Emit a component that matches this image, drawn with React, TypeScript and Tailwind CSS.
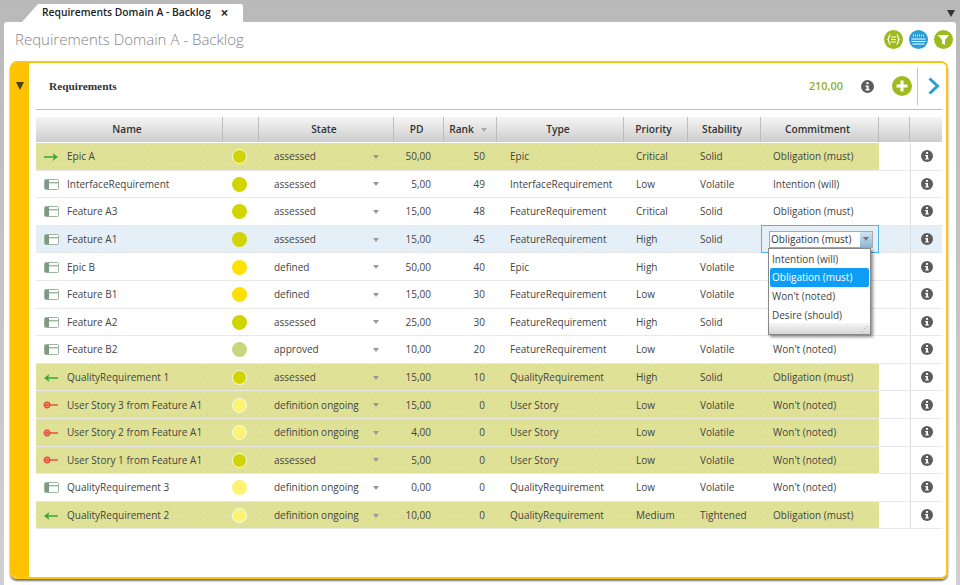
const cols = "grid grid-cols-[187px_36px_135px_50px_53px_127px_64px_73px_118px] items-center";

type RowData = {
  name: string;
  icon: "right" | "left" | "box" | "pin";
  state: string;
  pd: string;
  rank: string;
  type: string;
  priority: string;
  stability: string;
  commitment: string;
  hl?: boolean;
  selected?: boolean;
};

const rows: RowData[] = [
  { name: "Epic A", icon: "right", state: "assessed", pd: "50,00", rank: "50", type: "Epic", priority: "Critical", stability: "Solid", commitment: "Obligation (must)", hl: true },
  { name: "InterfaceRequirement", icon: "box", state: "assessed", pd: "5,00", rank: "49", type: "InterfaceRequirement", priority: "Low", stability: "Volatile", commitment: "Intention (will)" },
  { name: "Feature A3", icon: "box", state: "assessed", pd: "15,00", rank: "48", type: "FeatureRequirement", priority: "Critical", stability: "Solid", commitment: "Obligation (must)" },
  { name: "Feature A1", icon: "box", state: "assessed", pd: "15,00", rank: "45", type: "FeatureRequirement", priority: "High", stability: "Solid", commitment: "", selected: true },
  { name: "Epic B", icon: "box", state: "defined", pd: "50,00", rank: "40", type: "Epic", priority: "High", stability: "Volatile", commitment: "" },
  { name: "Feature B1", icon: "box", state: "defined", pd: "15,00", rank: "30", type: "FeatureRequirement", priority: "Low", stability: "Volatile", commitment: "" },
  { name: "Feature A2", icon: "box", state: "assessed", pd: "25,00", rank: "30", type: "FeatureRequirement", priority: "High", stability: "Solid", commitment: "" },
  { name: "Feature B2", icon: "box", state: "approved", pd: "10,00", rank: "20", type: "FeatureRequirement", priority: "Low", stability: "Volatile", commitment: "Won't (noted)" },
  { name: "QualityRequirement 1", icon: "left", state: "assessed", pd: "15,00", rank: "10", type: "QualityRequirement", priority: "High", stability: "Solid", commitment: "Obligation (must)", hl: true },
  { name: "User Story 3 from Feature A1", icon: "pin", state: "definition ongoing", pd: "15,00", rank: "0", type: "User Story", priority: "Low", stability: "Volatile", commitment: "Won't (noted)", hl: true },
  { name: "User Story 2 from Feature A1", icon: "pin", state: "definition ongoing", pd: "4,00", rank: "0", type: "User Story", priority: "Low", stability: "Volatile", commitment: "Won't (noted)", hl: true },
  { name: "User Story 1 from Feature A1", icon: "pin", state: "assessed", pd: "5,00", rank: "0", type: "User Story", priority: "Low", stability: "Volatile", commitment: "Won't (noted)", hl: true },
  { name: "QualityRequirement 3", icon: "box", state: "definition ongoing", pd: "0,00", rank: "0", type: "QualityRequirement", priority: "Low", stability: "Volatile", commitment: "Won't (noted)" },
  { name: "QualityRequirement 2", icon: "left", state: "definition ongoing", pd: "10,00", rank: "0", type: "QualityRequirement", priority: "Medium", stability: "Tightened", commitment: "Obligation (must)", hl: true },
];

function RowIcon({ icon }: { icon: RowData["icon"] }) {
  if (icon === "right")
    return (
      <svg width="16" height="10" viewBox="0 0 16 10">
        <path d="M1 5h10" stroke="#3aa535" strokeWidth="1.5" />
        <path d="M9.500 1 15 5l-5.500 4 1.500-4z" fill="#3aa535" />
      </svg>
    );
  if (icon === "left")
    return (
      <svg width="16" height="10" viewBox="0 0 16 10">
        <path d="M15 5H5" stroke="#3aa535" strokeWidth="1.5" />
        <path d="M6.500 1 1 5l5.500 4L5 5z" fill="#3aa535" />
      </svg>
    );
  if (icon === "pin")
    return (
      <svg width="16" height="10" viewBox="0 0 16 10" fill="none" stroke="#e8453c">
        <circle cx="4" cy="5" r="2.800" strokeWidth="1.300" />
        <path d="M1 5h14" strokeWidth="1.400" />
        <path d="M4 2v6" strokeWidth="1" />
      </svg>
    );
  return (
    <svg width="15" height="11" viewBox="0 0 15 11">
      <rect x="0.5" y="0.5" width="14" height="10" rx="1" fill="#fff" stroke="#9db5a0" />
      <rect x="1" y="1" width="4" height="9" fill="#7c9a7f" />
      <rect x="5" y="3" width="9" height="1.400" fill="#9db5a0" />
    </svg>
  );
}

function InfoIcon({ size = 12 }: { size?: number }) {
  return (
    <svg width={size} height={size} viewBox="0 0 12 12">
      <circle cx="6" cy="6" r="6" fill="#5c5c5c" />
      <rect x="5" y="2" width="2" height="1.800" fill="#fff" />
      <path d="M4.200 5h2.800v3.400h.9V9.600H4.200V8.400h1V6.200h-1z" fill="#fff" />
    </svg>
  );
}

function Dot({ state, hl }: { state: string; hl?: boolean }) {
  const color =
    state === "assessed"
      ? "bg-[#d2d400]"
      : state === "defined"
        ? "bg-[#ffe100]"
        : state === "approved"
          ? "bg-[#c6d77e]"
          : "bg-[#fbf373]";
  return (
    <div className={`${color} w-[13px] h-[13px] rounded-full box-content ${hl ? "border border-[#fafaec]" : "border border-transparent"}`} />
  );
}

function Row({ r }: { r: RowData }) {
  const bg = r.hl
    ? "bg-[#dfe296] bg-[radial-gradient(circle,#d5d888_0.5px,transparent_0.8px)] bg-size-[7px_7px]"
    : r.selected
      ? "bg-[#e4eff7]"
      : "bg-white";
  return (
    <div className={`flex h-[27.6px] text-[#444] border-b border-[#e8e8e8] ${r.selected ? "bg-[#e4eff7]" : ""}`}>
      <div className={`${cols} ${bg} w-[843px] relative pt-px`}>
        <div className="flex items-center pl-[7px] gap-[8px] whitespace-nowrap">
          <span className="w-[16px] flex justify-center shrink-0">
            <RowIcon icon={r.icon} />
          </span>
          {r.name}
        </div>
        <div className="flex justify-center pr-[4px]">
          <Dot state={r.state} hl={r.hl} />
        </div>
        <div className="flex items-center justify-between pl-[15px] pr-[15px]">
          <span className="whitespace-nowrap">{r.state}</span>
          <span className="w-0 h-0 border-x-[3.500px] border-x-transparent border-t-[4px] border-t-[#999]" />
        </div>
        <div className="text-right pr-[13px]">{r.pd}</div>
        <div className="text-right pr-[12px]">{r.rank}</div>
        <div className="pl-[13px] whitespace-nowrap">{r.type}</div>
        <div className="pl-[12px]">{r.priority}</div>
        <div className="pl-[12px]">{r.stability}</div>
        <div className="pl-[12px] whitespace-nowrap">{r.commitment}</div>
        {r.selected && <CommitEditor />}
      </div>
      <div className="w-[32px] border-r border-[#dcdcdc]" />
      <div className="flex-1 flex items-center justify-center pl-[1px]">
        <InfoIcon />
      </div>
    </div>
  );
}

function CommitEditor() {
  return (
    <div className="absolute left-[725px] top-[-1px] w-[118px] h-[28.600px] border border-[#4db4f0] pl-[7px] pr-[5px] pt-[5px] z-10">
      <div className="flex h-[17px] border border-[#a9a9a9] bg-white">
        <span className="flex-1 pl-[1px] leading-[15px] text-[#333] whitespace-nowrap">Obligation (must)</span>
        <span className="w-[12px] bg-gradient-to-b from-[#cfe3f2] to-[#8fb7d4] flex items-center justify-center">
          <span className="w-0 h-0 border-x-[3px] border-x-transparent border-t-[4px] border-t-[#777]" />
        </span>
      </div>
      <div className="absolute left-[6px] top-[22px] w-[103px] h-[87px] bg-white border border-[#888] shadow-[2px_2px_3px_rgba(0,0,0,0.45)] pt-[1px] text-[#444]">
        <div className="h-[18.600px] leading-[18.600px] pl-[3px]">Intention (will)</div>
        <div className="h-[18.600px] leading-[18.600px] pl-[3px] bg-[#0d9df5] text-white rounded-[2px] mx-[1px] -indent-[1px]">Obligation (must)</div>
        <div className="h-[18.600px] leading-[18.600px] pl-[3px]">Won't (noted)</div>
        <div className="h-[18.600px] leading-[18.600px] pl-[3px]">Desire (should)</div>
        <div className="absolute left-0 right-0 bottom-0 h-[11px] bg-gradient-to-b from-[#f6f6f6] to-[#d6d6d6] flex justify-end items-center pr-[2px] text-[7px] leading-none text-[#999]">
          ⋰
        </div>
      </div>
    </div>
  );
}

function HeaderCell({ children, line = true }: { children?: React.ReactNode; line?: boolean }) {
  return (
    <div className={`h-full flex items-center justify-center pr-[4px] ${line ? "border-r border-[#bdbdbd]" : ""}`}>{children}</div>
  );
}

export default function App() {
  return (
    <div
      className="w-[960px] h-[585px] overflow-hidden bg-gradient-to-b from-[#b9b9b9] to-[#d0d0d0] text-[10px]"
      style={{ fontFamily: '"Open Sans", "Noto Sans", sans-serif' }}
    >
      {/* tab strip */}
      <div className="h-[22px] flex items-end relative">
        <div className="ml-[22px] w-[221px] h-[18px] bg-white rounded-tr-[2px] flex items-center pl-[20px] font-semibold text-[#222] text-[10.300px] [clip-path:polygon(0_100%,16px_0,100%_0,100%_100%)]">
          <span className="whitespace-nowrap">Requirements Domain A - Backlog</span>
          <span className="ml-[10px] text-[14px] leading-none font-bold text-[#333]">×</span>
        </div>
        <span className="absolute left-[947px] top-[10px] w-0 h-0 border-x-[4px] border-x-transparent border-t-[7px] border-t-[#333]" />
      </div>

      {/* window */}
      <div className="ml-[4px] w-[952px] h-[563px] bg-white rounded-t-[3px] px-[6px]">
        <div className="h-[39px] flex items-center pl-[5px] pb-[5px] -mr-[3px]">
          <span className="text-[15px] font-light text-[#858585] whitespace-nowrap">
            Requirements Domain A - Backlog
          </span>
          <div className="ml-auto flex items-center gap-[6px]">
            <svg width="19" height="19" viewBox="0 0 19 19">
              <circle cx="9.5" cy="9.5" r="9.5" fill="#9dbb1f" />
              <path d="M6.500 4.500c-2 0-1 4-2.500 5 1.500 1 .5 5 2.500 5M12.500 4.500c2 0 1 4 2.500 5-1.500 1-.5 5-2.500 5" fill="none" stroke="#fff" strokeWidth="1.200" />
              <path d="M7 7h5M7 9.500h5M7 12h5" stroke="#fff" strokeWidth="1.100" />
            </svg>
            <svg width="19" height="19" viewBox="0 0 19 19">
              <circle cx="9.5" cy="9.5" r="9.5" fill="#2b9fd3" />
              <path d="M4 5.500h11" stroke="#bfe3f3" strokeWidth="2.200" strokeDasharray="1 1" />
              <path d="M2.500 9h14M2.500 11.500h14M3.500 14h12" stroke="#fff" strokeWidth="1" />
            </svg>
            <svg width="19" height="19" viewBox="0 0 19 19">
              <circle cx="9.5" cy="9.5" r="9.5" fill="#9dbb1f" />
              <path d="M4 5h11l-4 5v5l-3-1.500V10z" fill="#fff" />
            </svg>
          </div>
        </div>

        {/* yellow panel */}
        <div className="h-[518px] w-[938px] flex rounded-[7px] border-2 border-[#fdc511] border-l-0 shadow-[0_2px_2px_rgba(0,0,0,0.55)] overflow-hidden">
          <div className="w-[19px] bg-[#fdc300] flex justify-center pt-[19px] shrink-0">
            <span className="w-0 h-0 border-x-[4px] border-x-transparent border-t-[8px] border-t-[#4a4020]" />
          </div>
          <div className="flex-1 bg-white pl-[7px] pr-[4px]">
            <div className="h-[47px] border-b border-[#bdbdbd] flex items-center pl-[13px]">
              <span className="font-bold text-[#333] text-[11.300px]" style={{ fontFamily: '"Liberation Serif", serif' }}>
                Requirements
              </span>
              <span className="ml-auto font-semibold text-[#8fb11f] text-[10.900px]">210,00</span>
              <span className="ml-[18px] flex">
                <InfoIcon size={13} />
              </span>
              <svg className="ml-[18px]" width="20" height="20" viewBox="0 0 20 20">
                <circle cx="10" cy="10" r="10" fill="#9dbb1f" />
                <path d="M4.500 10h11M10 4.500v11" stroke="#fff" strokeWidth="3" />
              </svg>
              <div className="ml-[5px] h-[37px] w-px bg-[#c4c4c4]" />
              <svg className="ml-[9px] mr-[2px]" width="13" height="18" viewBox="0 0 13 18" fill="none" stroke="#2b9fd3" strokeWidth="3">
                <path d="M2.500 1.500 10.500 9l-8 7.500" />
              </svg>
            </div>

            {/* table */}
            <div className="mt-[7px]">
              <div className="flex h-[25px] bg-gradient-to-b from-[#f5f5f5] to-[#cdcdcd] font-semibold text-[10.200px] text-[#333]">
                <div className={`${cols} w-[843px] h-full`}>
                  <HeaderCell>Name</HeaderCell>
                  <HeaderCell />
                  <HeaderCell>State</HeaderCell>
                  <HeaderCell>PD</HeaderCell>
                  <HeaderCell>
                    <span>Rank</span>
                    <span className="ml-[7px] w-0 h-0 border-x-[3.500px] border-x-transparent border-t-[4px] border-t-[#aaa]" />
                  </HeaderCell>
                  <HeaderCell>Type</HeaderCell>
                  <HeaderCell>Priority</HeaderCell>
                  <HeaderCell>Stability</HeaderCell>
                  <HeaderCell>Commitment</HeaderCell>
                </div>
                <div className="w-[32px] border-x border-x-[#bdbdbd] -ml-px" />
                <div className="flex-1" />
              </div>
              <div className="pt-px">
                {rows.map((r) => (
                  <Row key={r.name} r={r} />
                ))}
              </div>
            </div>
          </div>
        </div>
      </div>
    </div>
  );
}
